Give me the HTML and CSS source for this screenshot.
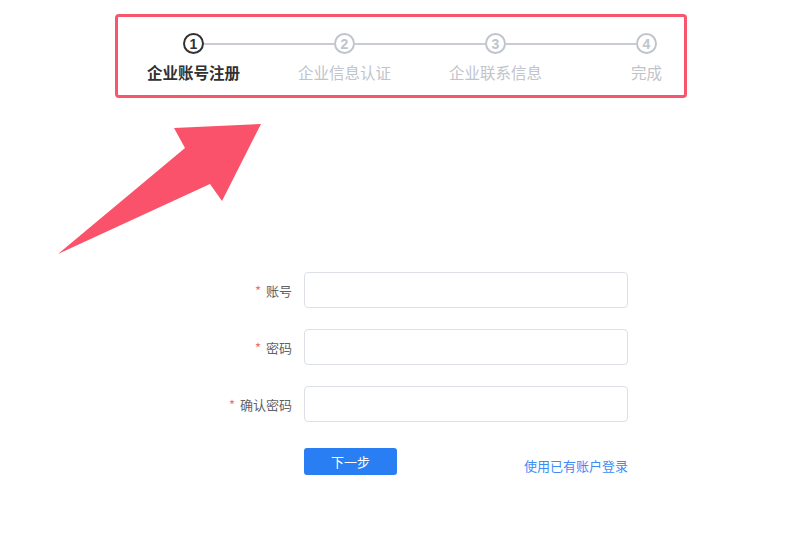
FILE: index.html
```html
<!DOCTYPE html>
<html lang="zh">
<head>
<meta charset="utf-8">
<link rel="stylesheet" href="styles.css">
</head>
<body>
<div class="page">
  <div class="steps-box">
    <div class="circles">
      <span class="circle active">1</span>
      <span class="line"></span>
      <span class="circle">2</span>
      <span class="line"></span>
      <span class="circle">3</span>
      <span class="line"></span>
      <span class="circle">4</span>
    </div>
    <div class="labels">
      <span class="label active">企业账号注册</span>
      <span class="label">企业信息认证</span>
      <span class="label">企业联系信息</span>
      <span class="label">完成</span>
    </div>
  </div>

  <form class="form">
    <div class="row">
      <label class="field-label"><span class="star">*</span>账号</label>
      <input class="input" type="text">
    </div>
    <div class="row">
      <label class="field-label"><span class="star">*</span>密码</label>
      <input class="input" type="password">
    </div>
    <div class="row">
      <label class="field-label"><span class="star">*</span>确认密码</label>
      <input class="input" type="password">
    </div>
    <div class="actions">
      <button type="button" class="btn">下一步</button>
      <a class="link" href="#">使用已有账户登录</a>
    </div>
  </form>

  <svg class="arrow" width="800" height="533" viewBox="0 0 800 533">
    <polygon points="58,254 185,148 174,128 261,124 222,201 210,184" fill="#f9526a"/>
  </svg>
</div>
</body>
</html>
```

FILE: styles.css
```css
html, body {
  margin: 0;
  padding: 0;
  background: #ffffff;
}
body {
  font-family: "Noto Sans CJK SC", "Noto Sans", "Liberation Sans", sans-serif;
}
.page {
  position: relative;
  width: 800px;
  height: 533px;
  overflow: hidden;
  padding-top: 14px;
  box-sizing: border-box;
}
.steps-box {
  margin-left: 115px;
  width: 572px;
  box-sizing: border-box;
  border: 3px solid #f7566d;
  border-radius: 4px;
  padding: 16px 0 13px 0;
  overflow: hidden;
}
.circles {
  display: flex;
  align-items: center;
  padding-left: 65px;
  height: 21px;
}
.circle {
  flex-shrink: 0;
  width: 21px;
  height: 21px;
  box-sizing: border-box;
  border: 2px solid #c0c4cc;
  border-radius: 50%;
  color: #c0c4cc;
  font-size: 14px;
  font-weight: 700;
  display: flex;
  align-items: center;
  justify-content: center;
  line-height: 1;
  font-family: "Liberation Sans", "Noto Sans", sans-serif;
}
.circle.active {
  border-color: #303133;
  color: #303133;
}
.line {
  flex-shrink: 0;
  width: 130px;
  height: 2px;
  background: #c9ccd3;
}
.labels {
  display: flex;
  margin-top: 8px;
}
.label {
  flex-shrink: 0;
  width: 151px;
  text-align: center;
  font-size: 15.5px;
  line-height: 20px;
  color: #c0c4cc;
}
.label.active {
  color: #303133;
  font-weight: 700;
}
.form {
  margin: 174px 0 0 192px;
  width: 436px;
  display: flex;
  flex-direction: column;
  gap: 21px;
}
.row {
  display: flex;
  align-items: center;
  height: 36px;
}
.field-label {
  width: 112px;
  box-sizing: border-box;
  padding-right: 12px;
  text-align: right;
  font-size: 13px;
  color: #606266;
}
.star {
  color: #f56c6c;
  margin-right: 5px;
}
.input {
  width: 324px;
  height: 36px;
  box-sizing: border-box;
  border: 1px solid #dcdfe6;
  border-radius: 4px;
  background: #fff;
  padding: 0 12px;
  margin: 0;
  outline: none;
}
.actions {
  display: flex;
  align-items: flex-end;
  margin-top: 5px;
  padding-left: 112px;
}
.btn {
  width: 93px;
  height: 27px;
  border: none;
  border-radius: 3px;
  background: #2a7ef4;
  color: #ffffff;
  font-family: inherit;
  font-size: 13px;
  padding: 0;
  cursor: pointer;
}
.link {
  margin-left: auto;
  font-size: 13px;
  line-height: 18px;
  color: #3b8cf5;
  text-decoration: none;
}
.arrow {
  position: absolute;
  left: 0;
  top: 0;
  pointer-events: none;
}
```
